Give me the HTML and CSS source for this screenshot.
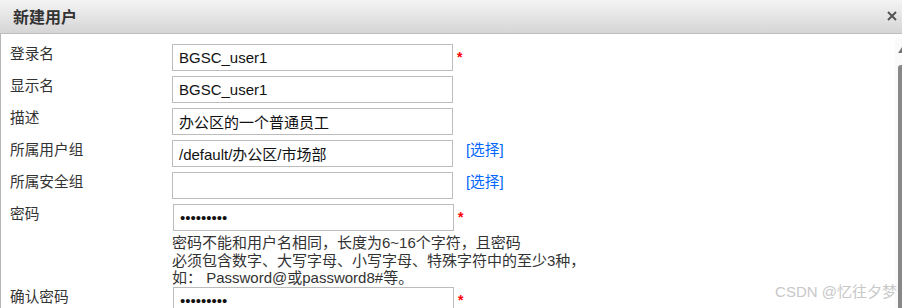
FILE: index.html
```html
<!DOCTYPE html>
<html lang="zh-CN">
<head>
  <meta charset="UTF-8">
  <title>新建用户</title>
  <link rel="stylesheet" href="styles.css">
</head>
<body>

  <div class="dialog">
    <!-- Title bar -->
    <div class="dialog-header">
      <span class="dialog-title">新建用户</span>
      <span class="dialog-close" title="关闭">
        <svg width="10" height="10" viewBox="0 0 10 10">
          <path d="M1 1 L9 9 M9 1 L1 9" stroke="#555" stroke-width="2" fill="none"/>
        </svg>
      </span>
    </div>

    <!-- Form area -->
    <div class="dialog-body">
      <div class="user-form">
        <div class="form-row">
          <label class="form-label">登录名</label>
          <div class="form-field">
            <div class="field-line">
              <input class="text-input" type="text" value="BGSC_user1">
              <span class="required">*</span>
            </div>
          </div>
        </div>

        <div class="form-row">
          <label class="form-label">显示名</label>
          <div class="form-field">
            <div class="field-line">
              <input class="text-input" type="text" value="BGSC_user1">
            </div>
          </div>
        </div>

        <div class="form-row">
          <label class="form-label">描述</label>
          <div class="form-field">
            <div class="field-line">
              <input class="text-input" type="text" value="办公区的一个普通员工">
            </div>
          </div>
        </div>

        <div class="form-row">
          <label class="form-label">所属用户组</label>
          <div class="form-field">
            <div class="field-line">
              <input class="text-input" type="text" value="/default/办公区/市场部">
              <a class="pick-link" href="#">[选择]</a>
            </div>
          </div>
        </div>

        <div class="form-row">
          <label class="form-label">所属安全组</label>
          <div class="form-field">
            <div class="field-line">
              <input class="text-input" type="text" value="">
              <a class="pick-link" href="#">[选择]</a>
            </div>
          </div>
        </div>

        <div class="form-row has-hint">
          <label class="form-label">密码</label>
          <div class="form-field">
            <div class="field-line">
              <input class="text-input pwd" type="password" value="123456789">
              <span class="required">*</span>
            </div>
            <div class="field-hint">
              密码不能和用户名相同，长度为6~16个字符，且密码<br>
              必须包含数字、大写字母、小写字母、特殊字符中的至少3种，<br>
              如： Password@或password8#等。
            </div>
          </div>
        </div>

        <div class="form-row">
          <label class="form-label">确认密码</label>
          <div class="form-field">
            <div class="field-line">
              <input class="text-input pwd" type="password" value="123456789">
              <span class="required">*</span>
            </div>
          </div>
        </div>
      </div>

      <!-- fake scrollbar -->
      <div class="scrollbar">
        <div class="scroll-arrow"></div>
        <div class="scroll-thumb"></div>
      </div>
    </div>

    <div class="watermark">CSDN @忆往夕梦</div>
  </div>

</body>
</html>
```

FILE: styles.css
```css
* {
  box-sizing: border-box;
}

body {
  margin: 0;
  padding: 0;
  font-family: 'Liberation Sans', 'Noto Sans CJK SC', sans-serif;
  font-size: 14.67px;
  color: #333;
  background: #fff;
  overflow: hidden;
}

.dialog {
  position: relative;
  width: 902px;
  height: 308px;
  overflow: hidden;
}

/* Title bar */
.dialog-header {
  height: 34px;
  display: flex;
  align-items: center;
  justify-content: space-between;
  padding: 0 5px 2px 13px;
  background: linear-gradient(to bottom, #f4f4f4, #d5d5d5);
  border-bottom: 1px solid #bdbdbd;
}

.dialog-title {
  font-size: 16px;
  font-weight: bold;
  color: #333;
}

.dialog-close {
  display: flex;
  cursor: pointer;
}

/* Body */
.dialog-body {
  display: flex;
  height: 274px;
  border-left: 1px solid #b5b5b5;
}

.user-form {
  flex: 1;
  padding: 10px 0 0 9px;
}

.form-row {
  display: flex;
  margin-bottom: 5px;
}

.form-row.has-hint {
  margin-bottom: 0;
}

.form-label {
  width: 162px;
  flex-shrink: 0;
  line-height: 20px;
  color: #333;
}

.field-line {
  display: flex;
  align-items: flex-start;
}

.text-input {
  width: 281px;
  height: 27px;
  padding: 0 6px;
  border: 1px solid #bcbcbc;
  border-radius: 0;
  font-family: 'Liberation Sans', 'Noto Sans CJK SC', sans-serif;
  font-size: 15px;
  color: #111;
  background: #fff;
  outline: none;
}

.text-input.pwd {
  margin-left: 1px;
}

.required {
  margin-left: 4px;
  line-height: 27px;
  font-size: 14px;
  font-weight: bold;
  color: #f00;
}

.pick-link {
  margin-left: 13px;
  line-height: 20px;
  color: #0066ff;
  text-decoration: none;
}

.field-hint {
  padding-top: 3px;
  font-size: 15px;
  line-height: 17.5px;
  color: #333;
}

/* Scrollbar on the right */
.scrollbar {
  width: 7px;
  margin-top: 4px;
  padding-left: 3px;
  background: #fafafa;
}

.scroll-arrow {
  width: 0;
  height: 0;
  margin-top: 9px;
  border-left: 4px solid transparent;
  border-right: 4px solid transparent;
  border-bottom: 6px solid #777;
}

.scroll-thumb {
  height: 300px;
  margin-top: 12px;
  background: #888;
  border-radius: 3px 0 0 0;
}

.watermark {
  position: absolute;
  right: 5px;
  bottom: 7px;
  font-size: 15px;
  color: #c8c8c8;
  text-shadow: 0 0 1px #fff;
}
```
